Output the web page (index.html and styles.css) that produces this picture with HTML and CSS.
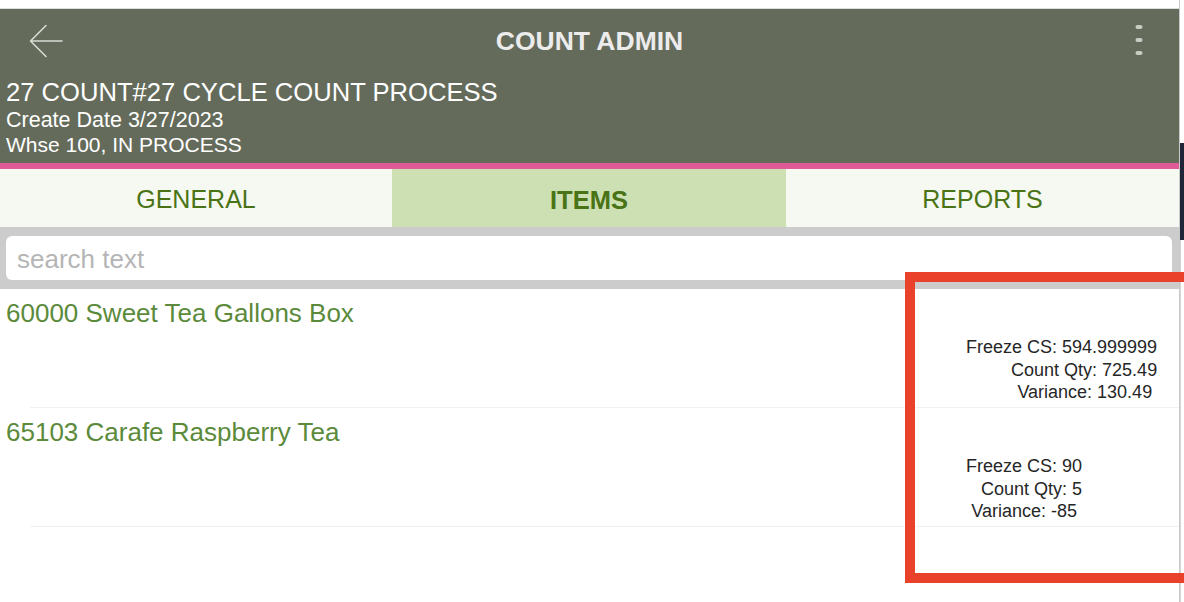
FILE: index.html
```html
<!DOCTYPE html>
<html>
<head>
<meta charset="utf-8">
<link rel="stylesheet" href="styles.css">
</head>
<body>
<div class="page">
  <div class="app">
    <div class="topgap"></div>
    <header class="header">
      <div class="toolbar">
        <div class="tb-left">
          <svg class="back" width="34" height="34" viewBox="0 0 34 34">
            <path d="M33 17 H1.5 M17 1.5 L1.5 17 L17 32.5" fill="none" stroke="#d9dcd4" stroke-width="1.6" stroke-linecap="round" stroke-linejoin="round"/>
          </svg>
        </div>
        <div class="tb-title">COUNT ADMIN</div>
        <div class="tb-right">
          <svg class="dots" width="8" height="30" viewBox="0 0 8 30">
            <rect x="0.5" y="0" width="7" height="4" rx="2" fill="#c9ccc3"/>
            <rect x="0.5" y="13" width="7" height="4" rx="2" fill="#c9ccc3"/>
            <rect x="0.5" y="26" width="7" height="4" rx="2" fill="#c9ccc3"/>
          </svg>
        </div>
      </div>
      <div class="info">
        <div class="info-1">27 COUNT#27 CYCLE COUNT PROCESS</div>
        <div class="info-2">Create Date 3/27/2023</div>
        <div class="info-3">Whse 100, IN PROCESS</div>
      </div>
    </header>
    <nav class="tabs">
      <div class="tab">GENERAL</div>
      <div class="tab active">ITEMS</div>
      <div class="tab">REPORTS</div>
    </nav>
    <div class="searchbar">
      <div class="search">search text</div>
    </div>
    <div class="list">
      <div class="row">
        <div class="title">60000 Sweet Tea Gallons Box</div>
        <div class="details">Freeze CS: 594.999999
Count Qty: 725.49
Variance: 130.49 </div>
      </div>
      <div class="sep"></div>
      <div class="row">
        <div class="title">65103 Carafe Raspberry Tea</div>
        <div class="details">Freeze CS: 90
Count Qty: 5
Variance: -85 </div>
      </div>
      <div class="sep"></div>
    </div>
  </div>
  <div class="edge">
    <div class="edge-top"></div>
    <div class="edge-dark"></div>
    <div class="edge-rest"></div>
  </div>
  <div class="annot"></div>
</div>
</body>
</html>
```

FILE: styles.css
```css
html, body {
  margin: 0;
  padding: 0;
  overflow: hidden;
  background: #ffffff;
}

.page {
  position: relative;
  display: flex;
  width: 1184px;
  height: 602px;
  font-family: "Liberation Sans", Arial, sans-serif;
}

.app {
  width: 1179px;
  display: flex;
  flex-direction: column;
  background: #ffffff;
}

.topgap {
  height: 8px;
  border-bottom: 1px solid #dcdcdc;
  background: #ffffff;
}

.header {
  background: #646b5b;
  height: 154px;
  border-bottom: 6px solid #e05a97;
  display: flex;
  flex-direction: column;
}

.toolbar {
  height: 64px;
  display: grid;
  grid-template-columns: 1fr auto 1fr;
  align-items: center;
}

.tb-left {
  display: flex;
  align-items: center;
  padding-left: 29px;
}

.back {
  display: block;
  margin-top: -1px;
}

.tb-title {
  color: #ececec;
  font-weight: bold;
  font-size: 26.5px;
  line-height: 30px;
  text-align: center;
}

.tb-right {
  display: flex;
  justify-content: flex-end;
  padding-right: 36px;
}

.dots {
  display: block;
  margin-top: -2px;
}

.info {
  margin-top: 4px;
  padding-left: 6px;
  color: #ffffff;
}

.info-1 {
  font-size: 25.6px;
  line-height: 30px;
}

.info-2 {
  font-size: 21.5px;
  line-height: 26px;
}

.info-3 {
  font-size: 21px;
  line-height: 24px;
}

.tabs {
  display: grid;
  grid-template-columns: 392px 394px 1fr;
  height: 58px;
}

.tab {
  display: flex;
  align-items: center;
  justify-content: center;
  background: #f6f9f1;
  color: #4a7316;
  font-size: 25px;
  padding-top: 2px;
}

.tab.active {
  background: #cde0b3;
  font-weight: bold;
  font-size: 25.5px;
  padding-top: 4px;
}

.searchbar {
  background: #cccccc;
  height: 62px;
  padding: 9px 7px 9px 6px;
  box-sizing: border-box;
}

.search {
  height: 44px;
  background: #ffffff;
  border-radius: 6px;
  color: #b5b5b5;
  font-size: 26px;
  line-height: 46px;
  padding-left: 11px;
}

.list {
  background: #ffffff;
  display: flex;
  flex-direction: column;
}

.row {
  display: flex;
  height: 118px;
}

.title {
  flex: 0 0 960px;
  padding-left: 6px;
  padding-top: 9px;
  font-size: 26px;
  line-height: 30px;
  color: #5b8a3b;
}

.details {
  padding-top: 47px;
  white-space: pre;
  text-align: right;
  font-size: 18px;
  line-height: 22.5px;
  color: #262626;
}

.sep {
  height: 1px;
  margin-left: 30px;
  background: #f1f1f1;
}

.edge {
  width: 5px;
  border-left: 1px solid #c9c9c9;
  box-sizing: border-box;
  display: flex;
  flex-direction: column;
}

.edge-top {
  height: 143px;
  background: #ffffff;
}

.edge-dark {
  height: 97px;
  background: #1f2637;
}

.edge-rest {
  flex: 1;
  background: #ffffff;
  border-left: 1px solid #d6d6d6;
}

.annot {
  position: absolute;
  left: 905px;
  top: 272px;
  width: 300px;
  height: 311px;
  box-sizing: border-box;
  border: 10px solid #e9412a;
}
```
